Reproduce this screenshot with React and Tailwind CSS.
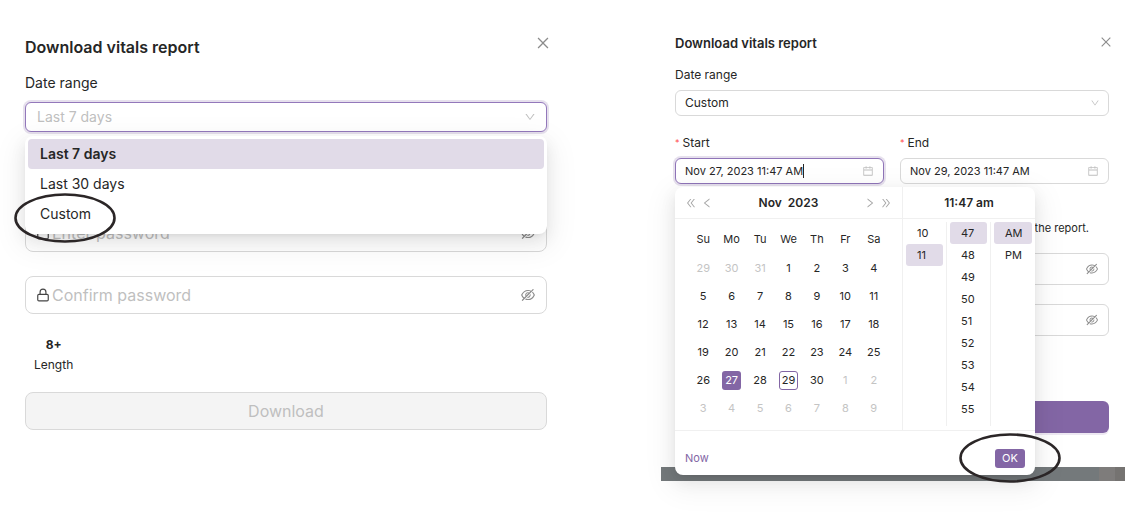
import {
  AiOutlineCalendar,
  AiOutlineClose,
  AiOutlineDoubleLeft,
  AiOutlineDoubleRight,
  AiOutlineDown,
  AiOutlineEyeInvisible,
  AiOutlineLeft,
  AiOutlineRight,
} from 'react-icons/ai';
import { Lock } from 'lucide-react';
import clsx from 'clsx';

const RANGES = ['Last 7 days', 'Last 30 days', 'Custom'];
const WEEKDAYS = ['Su', 'Mo', 'Tu', 'We', 'Th', 'Fr', 'Sa'];

// November 2023, padded with the neighbouring months
const WEEKS = [
  [29, 30, 31, 1, 2, 3, 4],
  [5, 6, 7, 8, 9, 10, 11],
  [12, 13, 14, 15, 16, 17, 18],
  [19, 20, 21, 22, 23, 24, 25],
  [26, 27, 28, 29, 30, 1, 2],
  [3, 4, 5, 6, 7, 8, 9],
];

const TIME_COLUMNS = [
  { label: 'Hour', values: ['10', '11'], selected: '11' },
  { label: 'Minute', values: ['47', '48', '49', '50', '51', '52', '53', '54', '55'], selected: '47' },
  { label: 'Period', values: ['AM', 'PM'], selected: 'AM' },
];

const POPUP_SHADOW =
  'shadow-[0_6px_16px_0_rgba(0,0,0,0.08),0_3px_6px_-4px_rgba(0,0,0,0.12),0_9px_28px_8px_rgba(0,0,0,0.05)]';

function Circle({ className }) {
  return (
    <svg
      className={clsx('pointer-events-none absolute h-[50px] w-[102px]', className)}
      viewBox="0 0 102 50"
      fill="none"
      aria-hidden="true"
    >
      <ellipse cx="51" cy="25" rx="49.5" ry="23.5" stroke="#2b2627" strokeWidth="2.6" />
    </svg>
  );
}

function PasswordField({ label, className, big }) {
  return (
    <div
      className={clsx(
        'flex items-center border border-[#d9d9d9] bg-white',
        big ? 'h-[38px] rounded-lg px-[10px]' : 'h-8 rounded-md px-[9px]',
        className
      )}
    >
      {big && <Lock className="mr-0.5 size-[14px] shrink-0 text-[#444]" strokeWidth={2} />}
      <input
        type="password"
        aria-label={label}
        placeholder={big ? label : undefined}
        className="min-w-0 flex-1 bg-transparent text-base outline-none placeholder:text-[#bfbfbf]"
      />
      <button type="button" aria-label="Show password" className="text-[#8c8c8c]">
        <AiOutlineEyeInvisible className={big ? 'size-4' : 'size-[14px]'} />
      </button>
    </div>
  );
}

function RangeDialog() {
  return (
    <section className="pt-[35px]">
      <div className="flex h-6 items-center justify-between">
        <h2 className="text-base font-semibold">Download vitals report</h2>
        <button type="button" aria-label="Close" className="-mt-2 -mr-1 text-[#8c8c8c]">
          <AiOutlineClose className="size-4" />
        </button>
      </div>
      <label htmlFor="range" className="mt-3 block text-sm leading-6">
        Date range
      </label>
      <div className="relative mt-[7px]">
        <select
          id="range"
          defaultValue="Last 7 days"
          className="block h-[30px] w-full appearance-none rounded-md border border-[#9378bb] bg-white px-[11px] text-sm text-[#bfbfbf] shadow-[0_0_0_2px_rgba(131,102,165,0.2)] outline-none"
        >
          {RANGES.map((r) => (
            <option key={r}>{r}</option>
          ))}
        </select>
        <AiOutlineDown className="pointer-events-none absolute top-[9px] right-[11px] size-3 text-[#bfbfbf]" />
        <ul
          role="listbox"
          aria-label="Date range"
          className={clsx('absolute inset-x-0 top-[34px] z-10 rounded-lg bg-white px-[3px] pt-[3px] pb-[5px]', POPUP_SHADOW)}
        >
          {RANGES.map((r, i) => (
            <li
              key={r}
              role="option"
              aria-selected={i === 0}
              className={clsx(
                'relative h-[30px] rounded px-3 text-sm leading-[30px]',
                i === 0 && 'bg-[#e1dbe8] font-semibold'
              )}
            >
              {r}
              {r === 'Custom' && <Circle className="-top-1.5 -left-3.5" />}
            </li>
          ))}
        </ul>
      </div>
      <PasswordField big label="Enter password" className="mt-[82px]" />
      <PasswordField big label="Confirm password" className="mt-6" />
      <div className="mt-[21px] ml-[9px] w-fit text-center text-xs leading-5">
        <p className="font-bold">8+</p>
        <p>Length</p>
      </div>
      <button
        type="button"
        disabled
        className="mt-[17px] h-[38px] w-full rounded-lg border border-[#d9d9d9] bg-[#f4f4f4] text-base text-[#bfbfbf]"
      >
        Download
      </button>
    </section>
  );
}

function Calendar() {
  return (
    <div className="flex-1 border-r border-[#f0f0f0]">
      <div className="flex h-8 items-center border-b border-[#f0f0f0] px-[10px] text-[#a6a6a6]">
        <button type="button" aria-label="Previous year">
          <AiOutlineDoubleLeft className="size-3" />
        </button>
        <button type="button" aria-label="Previous month" className="ml-1">
          <AiOutlineLeft className="size-3" />
        </button>
        <p className="flex-1 text-center text-xs font-semibold text-[#262626]">
          Nov<span className="ml-1.5">2023</span>
        </p>
        <button type="button" aria-label="Next month">
          <AiOutlineRight className="size-3" />
        </button>
        <button type="button" aria-label="Next year" className="ml-1">
          <AiOutlineDoubleRight className="size-3" />
        </button>
      </div>
      <div className="px-[14px] pt-[5px] pb-2">
        <table className="w-full table-fixed text-center text-[11px]">
          <thead>
            <tr>
              {WEEKDAYS.map((d) => (
                <th key={d} className="h-[30px] p-0 font-normal">{d}</th>
              ))}
            </tr>
          </thead>
          <tbody>
            {WEEKS.map((week, w) => (
              <tr key={w}>
                {week.map((day, d) => {
                  const outside = (w === 0 && day > 7) || (w > 3 && day < 10);
                  return (
                    <td key={d} className={clsx('h-7 p-0', outside && 'text-[#c4c4c4]')}>
                      <button
                        type="button"
                        className={clsx(
                          'size-[19px] rounded-[3px] align-middle',
                          day === 27 && 'bg-[#8366a5] text-white',
                          day === 29 && !outside && 'border border-[#8366a5]'
                        )}
                      >
                        {day}
                      </button>
                    </td>
                  );
                })}
              </tr>
            ))}
          </tbody>
        </table>
      </div>
    </div>
  );
}

function TimePanel() {
  return (
    <div className="flex w-[132px] flex-col">
      <p className="h-8 border-b border-[#f0f0f0] text-center text-xs leading-[31px] font-semibold">
        11:47 am
      </p>
      <div className="mt-[3px] mb-1 grid flex-1 grid-cols-3 divide-x divide-[#f0f0f0]">
        {TIME_COLUMNS.map((col) => (
          <ul key={col.label} role="listbox" aria-label={col.label} className="px-[3px]">
            {col.values.map((v) => (
              <li
                key={v}
                role="option"
                aria-selected={v === col.selected}
                className={clsx(
                  'h-[22px] rounded-[3px] pl-[11px] text-[11px] leading-[22px]',
                  v === col.selected && 'bg-[#e1dbe8]'
                )}
              >
                {v}
              </li>
            ))}
          </ul>
        ))}
      </div>
    </div>
  );
}

function DateTimePopup() {
  return (
    <div className={clsx('absolute top-[29px] left-0 z-10 w-[360px] rounded-lg bg-white', POPUP_SHADOW)}>
      <div className="flex">
        <Calendar />
        <TimePanel />
      </div>
      <div className="flex h-[45px] items-center justify-between border-t border-[#f0f0f0] px-[10px] pt-[11px] pb-[1px]">
        <a href="#now" className="text-[11px] text-[#8366a5]">Now</a>
        <div className="relative">
          <button
            type="button"
            className="block h-[19px] w-[30px] rounded-[3px] bg-[#8366a5] text-[11px] leading-[19px] text-white"
          >
            OK
          </button>
          <Circle className="-top-4 -left-9" />
        </div>
      </div>
    </div>
  );
}

function DateField({ id, label, value, active }) {
  return (
    <div>
      <label htmlFor={id} className="flex gap-[3px] text-xs leading-5">
        <span className="text-[9px] text-[#ff4d4f]">*</span>
        {label}
      </label>
      <div className="relative mt-[5px]">
        <div
          className={clsx(
            'flex h-[26px] items-center rounded-md border bg-white px-[9px]',
            active ? 'border-[#8f74b8] shadow-[0_0_0_2px_rgba(131,102,165,0.2)]' : 'border-[#d9d9d9]'
          )}
        >
          <input
            id={id}
            type="text"
            defaultValue={value}
            className="field-sizing-content bg-transparent text-[11px] outline-none"
          />
          {active && <span className="h-[14px] w-px bg-[#262626]" />}
          <AiOutlineCalendar className="ml-auto size-3 text-[#bfbfbf]" />
        </div>
        {active && <DateTimePopup />}
      </div>
    </div>
  );
}

function CustomDialog() {
  return (
    <section>
      <div className="pt-[34px] pr-4 pl-[14px]">
        <div className="flex h-5 items-center justify-between">
          <h2 className="text-[13px] font-semibold">Download vitals report</h2>
          <button type="button" aria-label="Close" className="-mt-1 -mr-1 text-[#8c8c8c]">
            <AiOutlineClose className="size-[14px]" />
          </button>
        </div>
        <label htmlFor="custom-range" className="mt-[11px] block text-xs leading-5">
          Date range
        </label>
        <div className="relative mt-[5px]">
          <select
            id="custom-range"
            defaultValue="Custom"
            className="block h-[26px] w-full appearance-none rounded-md border border-[#d9d9d9] bg-white px-[9px] text-xs outline-none"
          >
            {RANGES.map((r) => (
              <option key={r}>{r}</option>
            ))}
          </select>
          <AiOutlineDown className="pointer-events-none absolute top-2 right-[9px] size-[10px] text-[#bfbfbf]" />
        </div>
        <div className="mt-[17px] grid grid-cols-2 gap-4">
          <DateField id="start" label="Start" value="Nov 27, 2023 11:47 AM" active />
          <DateField id="end" label="End" value="Nov 29, 2023 11:47 AM" />
        </div>
        <p className="mt-[34px] pr-5 text-right text-[11px] leading-5">the report.</p>
        <PasswordField label="Enter password" className="mt-[15px]" />
        <PasswordField label="Confirm password" className="mt-[19px]" />
        <button
          type="button"
          aria-label="Download"
          className="mt-[65px] block h-8 w-full rounded-md bg-[#8366a5] shadow-[0_2px_0_rgba(131,102,165,0.15)]"
        />
      </div>
      {/* strip of the dimmed page under the dialog */}
      <div className="mt-[34px] flex h-[14px] bg-[#74797b]">
        <span className="ml-auto w-4 bg-[#7e7c7b]" />
        <span className="w-[10px] bg-[#757371]" />
      </div>
    </section>
  );
}

export default function App() {
  return (
    <main className="grid grid-cols-[522fr_464fr] gap-x-[114px] bg-white pr-5 pb-11 pl-[25px] font-['Inter',sans-serif] text-[#262626]">
      <RangeDialog />
      <CustomDialog />
    </main>
  );
}
